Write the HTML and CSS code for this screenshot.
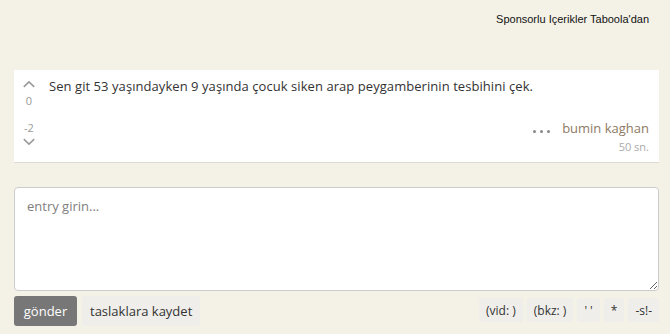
FILE: index.html
```html
<!DOCTYPE html>
<html lang="tr">
<head>
    <meta charset="UTF-8">
    <title>entry</title>
    <link rel="stylesheet" href="styles.css">
</head>
<body>

    <div class="sponsor">Sponsorlu Içerikler Taboola'dan</div>

    <div class="entry">
        <div class="votes">
            <svg class="arrow up" width="12" height="8" viewBox="0 0 12 8"><path d="M0.8 6.8 L6 1.8 L11.2 6.8" fill="none" stroke="#9a9a9a" stroke-width="1.6"/></svg>
            <span class="up-count">0</span>
            <span class="down-count">-2</span>
            <svg class="arrow down" width="12" height="8" viewBox="0 0 12 8"><path d="M0.8 1.2 L6 6.2 L11.2 1.2" fill="none" stroke="#9a9a9a" stroke-width="1.6"/></svg>
        </div>
        <div class="entry-body">
            <p class="entry-text">Sen git 53 yaşındayken 9 yaşında çocuk siken arap peygamberinin tesbihini çek.</p>
            <div class="entry-footer">
                <span class="dots"><i></i><i></i><i></i></span>
                <div class="author-info">
                    <a class="author" href="#">bumin kaghan</a>
                    <span class="date">50 sn.</span>
                </div>
            </div>
        </div>
    </div>

    <div class="editor">
        <textarea placeholder="entry girin..."></textarea>
        <div class="editor-bar">
            <div class="actions">
                <button class="btn-send">gönder</button>
                <button class="btn-draft">taslaklara kaydet</button>
            </div>
            <div class="tools">
                <button>(vid: )</button>
                <button>(bkz: )</button>
                <button>' '</button>
                <button>*</button>
                <button>-s!-</button>
            </div>
        </div>
    </div>

</body>
</html>
```

FILE: styles.css
```css
body {
    margin: 0;
    padding: 0 11px 0 14px;
    background-color: #f4f1e7;
    font-family: "Open Sans", sans-serif;
    font-size: 13px;
    color: #333;
}

.sponsor {
    font-family: "Liberation Sans", Arial, sans-serif;
    font-size: 11px;
    color: #111;
    text-align: right;
    padding: 13px 10px 0 0;
    height: 57px;
}

.entry {
    display: flex;
    background-color: white;
    border-bottom: 1px solid #dddbd3;
    height: 92px;
}

.votes {
    width: 30px;
    display: flex;
    flex-direction: column;
    align-items: center;
    padding-top: 10px;
    font-size: 11px;
    color: #999;
}

.up-count {
    line-height: 13px;
    margin-top: 6px;
}

.down-count {
    line-height: 13px;
    margin-top: 14px;
}

.votes .arrow {
    display: block;
}

.votes .down {
    margin-top: 4px;
}

.entry-body {
    flex: 1;
    display: flex;
    flex-direction: column;
    padding: 0 10px 0 5px;
}

.entry-text {
    margin: 7px 0 0 0;
    line-height: 18px;
    letter-spacing: 0.06px;
    flex: 1;
}

.entry-footer {
    display: flex;
    justify-content: flex-end;
    align-items: flex-start;
    padding-bottom: 7px;
}

.dots {
    display: flex;
    gap: 4px;
    margin: 11px 12px 0 0;
}

.dots i {
    width: 3px;
    height: 3px;
    border-radius: 50%;
    background-color: #888;
}

.author-info {
    display: flex;
    flex-direction: column;
    align-items: flex-end;
}

.author {
    color: #8e7a64;
    text-decoration: none;
    line-height: 18px;
}

.date {
    font-size: 11px;
    color: #aaa;
    line-height: 16px;
    margin-top: 2px;
}

.editor {
    margin-top: 24px;
}

textarea {
    display: block;
    box-sizing: border-box;
    width: 100%;
    height: 104px;
    padding: 9px 12px;
    border: 1px solid #ccc;
    border-radius: 4px;
    font-family: "Open Sans", sans-serif;
    font-size: 13px;
    color: #333;
    resize: vertical;
}

textarea::placeholder {
    color: #808080;
}

.editor-bar {
    display: flex;
    justify-content: space-between;
    margin-top: 5px;
}

.actions {
    display: flex;
    gap: 5px;
}

.actions button {
    height: 30px;
    border: none;
    border-radius: 3px;
    font-family: "Open Sans", sans-serif;
    font-size: 13px;
    padding: 0 8px;
    cursor: pointer;
}

.btn-send {
    background-color: #777;
    color: white;
    width: 63px;
}

.btn-draft {
    background-color: #efeeea;
    color: #333;
}

.tools {
    display: flex;
    gap: 4px;
    padding-top: 2px;
}

.tools button {
    height: 24px;
    border: none;
    border-radius: 3px;
    background-color: #efeeea;
    color: #333;
    font-family: "Open Sans", sans-serif;
    font-size: 12px;
    padding: 0 7px;
    cursor: pointer;
}
```
